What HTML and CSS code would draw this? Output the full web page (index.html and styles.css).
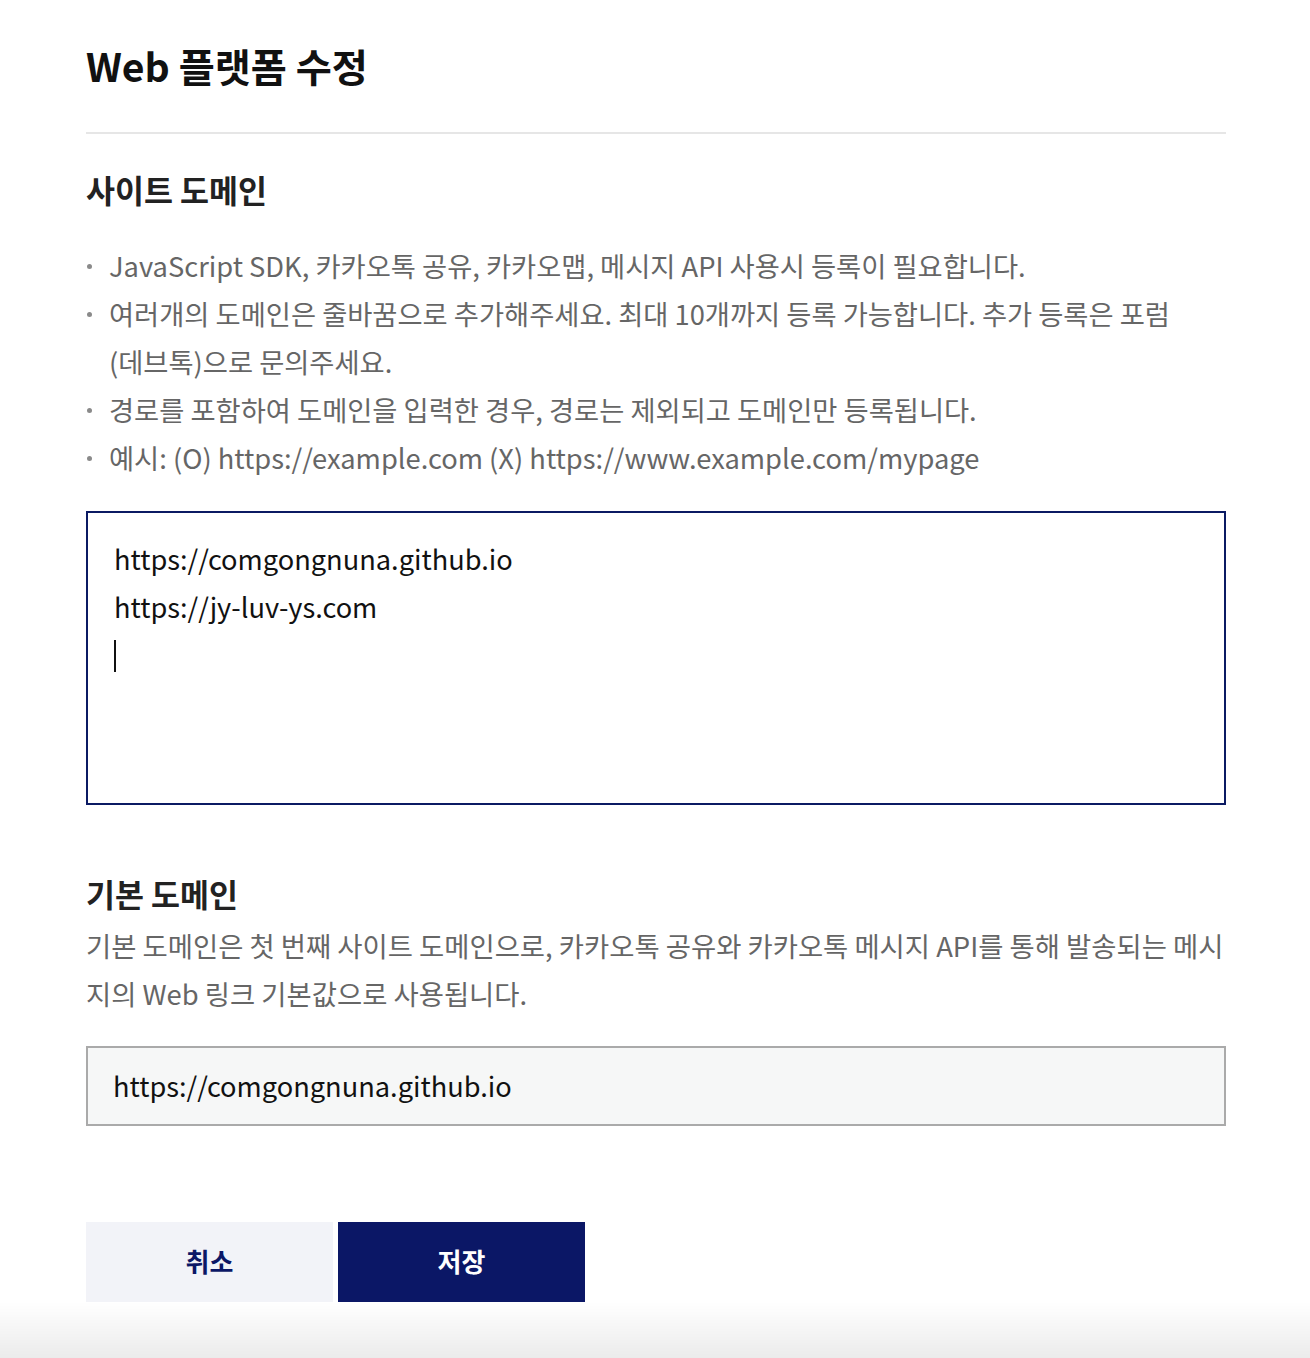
FILE: index.html
```html
<!DOCTYPE html>
<html lang="en">
<head>
<meta charset="utf-8">
<title>Web 플랫폼 수정</title>
<link rel="stylesheet" href="styles.css">
</head>
<body>
<div class="page">
  <h1 class="title">Web 플랫폼 수정</h1>

  <section class="section">
    <h2 class="section-title">사이트 도메인</h2>
    <ul class="notes">
      <li>JavaScript SDK, 카카오톡 공유, 카카오맵, 메시지 API 사용시 등록이 필요합니다.</li>
      <li>여러개의 도메인은 줄바꿈으로 추가해주세요. 최대 10개까지 등록 가능합니다. 추가 등록은 포럼 (데브톡)으로 문의주세요.</li>
      <li>경로를 포함하여 도메인을 입력한 경우, 경로는 제외되고 도메인만 등록됩니다.</li>
      <li>예시: (O) https://example.com (X) https://www.example.com/mypage</li>
    </ul>
    <div class="textarea">
      <div class="line">https://comgongnuna.github.io</div>
      <div class="line">https://jy-luv-ys.com</div>
      <div class="line"><span class="caret"></span></div>
    </div>
  </section>

  <section class="section section-default">
    <h2 class="section-title">기본 도메인</h2>
    <p class="desc">기본 도메인은 첫 번째 사이트 도메인으로, 카카오톡 공유와 카카오톡 메시지 API를 통해 발송되는 메시지의 Web 링크 기본값으로 사용됩니다.</p>
    <div class="input">https://comgongnuna.github.io</div>
  </section>

  <div class="buttons">
    <button class="btn btn-cancel">취소</button>
    <button class="btn btn-save">저장</button>
  </div>
</div>
<div class="bottom-fade"></div>
</body>
</html>
```

FILE: styles.css
```css
html, body {
  margin: 0;
  padding: 0;
  background: #fff;
}

body {
  font-family: "Noto Sans CJK KR", "Noto Sans", sans-serif;
  color: #111;
  height: 1358px;
  overflow: hidden;
}

.page {
  width: 1140px;
  padding: 0 84px 0 86px;
}

.title {
  margin: 37px 0 0;
  font-size: 39.2px;
  line-height: 56px;
  font-weight: 700;
  color: #111;
  padding-bottom: 39px;
  border-bottom: 2px solid #e6e6e6;
}

.section-title {
  margin: 0;
  font-size: 31.5px;
  line-height: 40px;
  font-weight: 700;
  color: #222;
}

.section {
  padding-top: 35px;
}

.notes {
  list-style: none;
  margin: 32px 0 0;
  padding: 0;
  font-size: 27.3px;
  line-height: 48px;
  color: #666;
  word-break: keep-all;
}

.notes li {
  position: relative;
  padding-left: 23px;
}

.notes li::before {
  content: "";
  position: absolute;
  left: 1px;
  top: 23px;
  width: 5px;
  height: 5px;
  border-radius: 50%;
  background: #8a8a8a;
}

.textarea {
  margin-top: 30px;
  border: 2px solid #0b1a63;
  padding: 21px 26px 0;
  box-sizing: border-box;
  height: 294px;
  font-size: 27.2px;
  line-height: 48px;
  color: #111;
}

.line {
  height: 48px;
}

.caret {
  display: inline-block;
  width: 2px;
  height: 32px;
  background: #111;
  vertical-align: -6px;
}

.section-default {
  padding-top: 68px;
}

.desc {
  margin: 8px 0 0;
  font-size: 27.4px;
  line-height: 48px;
  color: #666;
  word-break: break-all;
}

.input {
  margin-top: 29px;
  height: 80px;
  box-sizing: border-box;
  border: 2px solid #aaa;
  background: #f6f7f7;
  padding: 0 25px 3px;
  display: flex;
  align-items: center;
  font-size: 27.2px;
  color: #111;
}

.buttons {
  margin-top: 96px;
  display: flex;
  gap: 5px;
}

.btn {
  width: 247px;
  height: 80px;
  border: none;
  font-family: inherit;
  font-size: 26px;
  font-weight: 700;
  padding: 0 0 3px;
  cursor: pointer;
}

.btn-cancel {
  background: #f2f3f8;
  color: #0b1766;
}

.btn-save {
  background: #0b1766;
  color: #fff;
}

.bottom-fade {
  position: fixed;
  left: 0;
  right: 0;
  bottom: 0;
  height: 56px;
  background: linear-gradient(to bottom, rgba(0,0,0,0), rgba(0,0,0,0.08));
  pointer-events: none;
}
```
